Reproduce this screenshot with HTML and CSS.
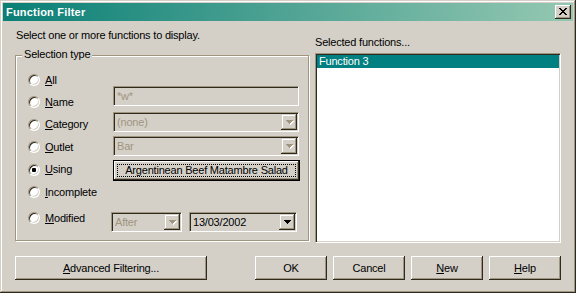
FILE: index.html
```html
<!DOCTYPE html>
<html lang="en">
<head>
  <meta charset="UTF-8" />
  <title>Function Filter</title>
  <link rel="stylesheet" href="styles.css">
</head>
<body>

  <div class="window">

    <!-- Title bar -->
    <div class="titlebar">
      <span class="title">Function Filter</span>
      <button type="button" class="close-btn">
        <svg width="8" height="7" viewBox="0 0 8 7" shape-rendering="crispEdges">
          <path fill="#000" d="M0 0h2v1H0zM6 0h2v1H6zM1 1h2v1H1zM5 1h2v1H5zM2 2h4v1H2zM3 3h2v1H3zM2 4h4v1H2zM1 5h2v1H1zM5 5h2v1H5zM0 6h2v1H0zM6 6h2v1H6z"/>
        </svg>
      </button>
    </div>

    <div class="dialog">
      <!-- Left: selection type -->
      <div class="left-col">
        <p class="intro">Select one or more functions to display.</p>
        <div class="groupbox">
          <span class="legend">Selection type</span>

          <div class="row">
            <label class="opt"><span class="radio"></span><span><u>A</u>ll</span></label>
          </div>

          <div class="row">
            <label class="opt"><span class="radio"></span><span><u>N</u>ame</span></label>
            <div class="field disabled shift-name">*w*</div>
          </div>

          <div class="row tall">
            <label class="opt"><span class="radio"></span><span><u>C</u>ategory</span></label>
            <div class="field combo disabled shift-cat">
              <span class="combo-text">(none)</span>
              <span class="drop off">
                <svg width="8" height="5" viewBox="0 0 8 5" shape-rendering="crispEdges"><path fill="#fff" d="M1 1h7v1H1zM2 2h5v1H2zM3 3h3v1H3zM4 4h1v1H4z"/><path fill="#a0957e" d="M0 0h7v1H0zM1 1h5v1H1zM2 2h3v1H2zM3 3h1v1H3z"/></svg>
              </span>
            </div>
          </div>

          <div class="row">
            <label class="opt"><span class="radio"></span><span><u>O</u>utlet</span></label>
            <div class="field combo disabled">
              <span class="combo-text">Bar</span>
              <span class="drop off">
                <svg width="8" height="5" viewBox="0 0 8 5" shape-rendering="crispEdges"><path fill="#fff" d="M1 1h7v1H1zM2 2h5v1H2zM3 3h3v1H3zM4 4h1v1H4z"/><path fill="#a0957e" d="M0 0h7v1H0zM1 1h5v1H1zM2 2h3v1H2zM3 3h1v1H3z"/></svg>
              </span>
            </div>
          </div>

          <div class="row tall">
            <label class="opt"><span class="radio checked"></span><span><u>U</u>sing</span></label>
            <button type="button" class="pick-btn">Argentinean Beef Matambre Salad</button>
          </div>

          <div class="row">
            <label class="opt"><span class="radio"></span><span><u>I</u>ncomplete</span></label>
          </div>

          <div class="row last">
            <label class="opt"><span class="radio"></span><span><u>M</u>odified</span></label>
            <div class="modified-controls">
              <div class="field combo disabled combo-after">
                <span class="combo-text">After</span>
                <span class="drop off">
                  <svg width="8" height="5" viewBox="0 0 8 5" shape-rendering="crispEdges"><path fill="#fff" d="M1 1h7v1H1zM2 2h5v1H2zM3 3h3v1H3zM4 4h1v1H4z"/><path fill="#a0957e" d="M0 0h7v1H0zM1 1h5v1H1zM2 2h3v1H2zM3 3h1v1H3z"/></svg>
                </span>
              </div>
              <div class="field combo combo-date">
                <span class="combo-text">13/03/2002</span>
                <span class="drop">
                  <svg width="7" height="4" viewBox="0 0 7 4" shape-rendering="crispEdges"><path fill="#000" d="M0 0h7v1H0zM1 1h5v1H1zM2 2h3v1H2zM3 3h1v1H3z"/></svg>
                </span>
              </div>
            </div>
          </div>
        </div>
      </div>

      <!-- Right: selected list -->
      <div class="right-col">
        <p class="list-label">Selected functions...</p>
        <div class="listbox">
          <div class="list-item selected">Function 3</div>
        </div>
      </div>
    </div>

    <!-- Buttons -->
    <div class="button-row">
      <button type="button" class="btn btn-wide"><u>A</u>dvanced Filtering...</button>
      <div class="btn-group">
        <button type="button" class="btn">OK</button>
        <button type="button" class="btn">Cancel</button>
        <button type="button" class="btn"><u>N</u>ew</button>
        <button type="button" class="btn"><u>H</u>elp</button>
      </div>
    </div>

  </div>

</body>
</html>
```

FILE: styles.css
```css
body {
  margin: 0;
  background: #d4d0c8;
  font-family: "Liberation Sans", Arial, sans-serif;
  font-size: 11px;
  line-height: 13px;
  letter-spacing: -0.2px;
  color: #000;
}
p {
  margin: 0;
}
button {
  font: inherit;
  letter-spacing: inherit;
  color: #000;
  padding: 0;
  border: none;
  background: #d4d0c8;
}
.window {
  width: 576px;
  height: 293px;
  box-sizing: border-box;
  padding: 3px;
  background: #d4d0c8;
  box-shadow: inset -1px -1px #2f2a20, inset 1px 1px #d4d0c8, inset -2px -2px #a0957e, inset 2px 2px #fff;
  display: flex;
  flex-direction: column;
}
.titlebar {
  height: 18px;
  display: flex;
  align-items: center;
  justify-content: space-between;
  padding: 0 2px 0 3px;
  background: linear-gradient(to right, #0a7f76, #95c8b2);
}
.title {
  color: #fff;
  font-weight: bold;
  letter-spacing: 0.2px;
}
.close-btn {
  width: 16px;
  height: 14px;
  display: flex;
  align-items: center;
  justify-content: center;
  padding: 0 1px 1px 0;
  box-sizing: border-box;
  box-shadow: inset -1px -1px #2f2a20, inset 1px 1px #fff, inset -2px -2px #a0957e;
}
.close-btn svg {
  display: block;
}

/* Main area */
.dialog {
  display: grid;
  grid-template-columns: 294px 246px;
  column-gap: 6px;
  padding: 0 12px;
}
.intro {
  margin-top: 8px;
  padding-left: 1px;
}
.groupbox {
  position: relative;
  margin-top: 13px;
  height: 186px;
  box-sizing: border-box;
  border: 1px solid #a0957e;
  box-shadow: inset 1px 1px #fff, 1px 1px #fff;
  padding: 13px 0 0 12px;
}
.legend {
  position: absolute;
  top: -8px;
  left: 6px;
  padding: 0 2px;
  background: #d4d0c8;
}
.row {
  display: flex;
  height: 22px;
}
.row.tall {
  height: 23px;
}
.row.last {
  margin-top: 4px;
}
.opt {
  width: 85px;
  display: flex;
  align-items: center;
}
.radio {
  position: relative;
  width: 12px;
  height: 12px;
  box-sizing: border-box;
  margin-right: 5px;
  border-radius: 50%;
  border: 1px solid;
  border-color: #a0957e #fff #fff #a0957e;
  box-shadow: inset 1px 1px #2f2a20, inset -1px -1px #d4d0c8;
  background: #fff;
}
.radio.checked::after {
  content: "";
  position: absolute;
  left: 3px;
  top: 3px;
  width: 4px;
  height: 4px;
  border-radius: 1px;
  background: #000;
}

/* Edit and combo fields */
.field {
  width: 186px;
  height: 20px;
  box-sizing: border-box;
  border: 1px solid;
  border-color: #a0957e #fff #fff #a0957e;
  box-shadow: inset 1px 1px #2f2a20, inset -1px -1px #d4d0c8;
  background: #d4d0c8;
  padding: 1px 1px 1px 3px;
  display: flex;
  align-items: center;
}
.field.disabled {
  color: #a0957e;
}
.shift-name {
  margin-top: -5px;
}
.shift-cat {
  margin-top: -1px;
}
.combo-text {
  flex: 1;
}
.drop {
  width: 16px;
  height: 16px;
  display: flex;
  align-items: center;
  justify-content: center;
  box-shadow: inset -1px -1px #2f2a20, inset 1px 1px #d4d0c8, inset -2px -2px #a0957e, inset 2px 2px #fff;
}
.drop svg {
  display: block;
}
.drop.off svg {
  margin: 1px 0 0 1px;
}
.pick-btn {
  position: relative;
  margin-top: 2px;
  width: 187px;
  height: 21px;
  box-sizing: border-box;
  border: 1px solid #000;
  box-shadow: inset -1px -1px #2f2a20, inset 1px 1px #fff, inset -2px -2px #a0957e;
}
.pick-btn::after {
  content: "";
  position: absolute;
  inset: 3px;
  border: 1px dotted #000;
}
.modified-controls {
  display: flex;
  gap: 7px;
  margin: 5px 0 0 -2px;
}
.combo-after {
  width: 71px;
}
.combo-date {
  width: 108px;
}

/* Right list */
.list-label {
  margin-top: 15px;
}
.listbox {
  margin-top: 4px;
  height: 190px;
  box-sizing: border-box;
  border: 1px solid;
  border-color: #a0957e #fff #fff #a0957e;
  box-shadow: inset 1px 1px #2f2a20, inset -1px -1px #d4d0c8;
  background: #fff;
  padding: 1px;
}
.list-item {
  height: 13px;
  padding-left: 2px;
}
.list-item.selected {
  background: #008080;
  color: #fff;
}

/* Bottom buttons */
.button-row {
  display: flex;
  justify-content: space-between;
  margin-top: 13px;
  padding: 0 12px;
}
.btn-group {
  display: flex;
  gap: 6px;
}
.btn {
  width: 72px;
  height: 24px;
  box-shadow: inset -1px -1px #2f2a20, inset 1px 1px #fff, inset -2px -2px #a0957e;
}
.btn-wide {
  width: 192px;
}
```
